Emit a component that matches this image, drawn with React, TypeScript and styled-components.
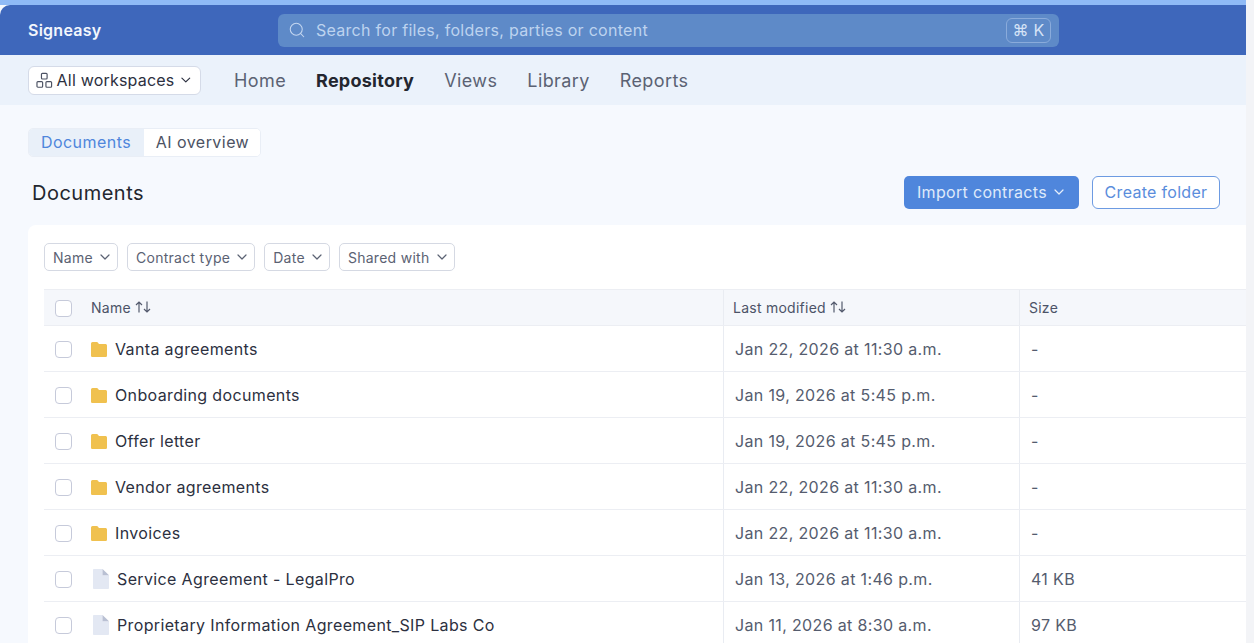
import React from "react";
import styled, { createGlobalStyle } from "styled-components";
import { ChevronDown, Search } from "lucide-react";

const Global = createGlobalStyle`
  html, body { margin: 0; padding: 0; height: 643px; overflow: hidden; background: #f3f4f7; }
  * { box-sizing: border-box; }
  body { font-family: Inter, "Liberation Sans", sans-serif; -webkit-font-smoothing: antialiased; }
`;

const Shell = styled.div`
  width: 1246px;
  height: 643px;
  overflow: hidden;
  background: #f6f9fe;
  display: flex;
  flex-direction: column;
`;
const TopStrip = styled.div`
  height: 5px;
  flex: none;
  background: #8fbaf6;
`;
const Header = styled.header`
  height: 50px;
  flex: none;
  background: #3e67bb;
  border-top-left-radius: 10px;
  display: grid;
  grid-template-columns: 250px 781px;
  align-items: center;
  padding-left: 28px;
`;
const Brand = styled.div`
  color: #f3f6fc;
  font-size: 16px;
  font-weight: 600;
  letter-spacing: 0.25px;
`;
const SearchBox = styled.div`
  height: 33px;
  border-radius: 6px;
  background: #5e8ac8;
  display: flex;
  align-items: center;
  padding: 0 8px 0 10px;
  color: #bdd3ef;
  font-size: 16px;
  letter-spacing: 0.28px;
  gap: 10px;
`;
const SearchLabel = styled.span`
  flex: 1;
`;
const Kbd = styled.span`
  height: 25px;
  width: 45px;
  border: 1px solid #8aabdb;
  border-radius: 6px;
  display: flex;
  align-items: center;
  justify-content: center;
  color: #d5e3f6;
  font-size: 16px;
`;
const SubNav = styled.nav`
  height: 50px;
  flex: none;
  background: #ebf2fb;
  display: flex;
  align-items: center;
  padding-left: 28px;
`;
const Workspace = styled.button`
  width: 173px;
  height: 29px;
  background: #fff;
  border: 1px solid #d5dbe8;
  border-radius: 6px;
  display: flex;
  align-items: center;
  padding: 0 6px 0 7px;
  gap: 4px;
  font: inherit;
  font-size: 16px;
  letter-spacing: 0.2px;
  color: #2c3040;
  margin-right: 33px;
`;
const WorkspaceLabel = styled.span`
  flex: 1;
  text-align: left;
  white-space: nowrap;
`;
const NavLink = styled.a<{ $active?: boolean }>`
  font-size: 18px;
  margin-right: 30px;
  font-weight: ${(p) => (p.$active ? 700 : 400)};
  letter-spacing: ${(p) => (p.$active ? "0.25px" : "0.4px")};
  color: ${(p) => (p.$active ? "#23262f" : "#5b6273")};
`;
const Content = styled.main`
  flex: 1;
  display: flex;
  flex-direction: column;
  padding: 23px 0 0 28px;
  min-height: 0;
`;
const Tabs = styled.div`
  width: 233px;
  height: 29px;
  display: grid;
  grid-template-columns: 115px 116px;
  border: 1px solid #e9eef6;
  border-radius: 5px;
  overflow: hidden;
  background: #fff;
`;
const Tab = styled.div<{ $active?: boolean }>`
  display: flex;
  align-items: center;
  justify-content: center;
  font-size: 16px;
  letter-spacing: 0.45px;
  padding: ${(p) => (p.$active ? "0 1px 1px 0" : "0 0 1px 1px")};
  background: ${(p) => (p.$active ? "#e9f0f9" : "#fff")};
  color: ${(p) => (p.$active ? "#4f86dc" : "#4c5263")};
`;
const TitleRow = styled.div`
  display: flex;
  align-items: center;
  height: 34px;
  margin-top: 18px;
  padding: 0 26px 0 4px;
  gap: 13px;
`;
const Title = styled.h1`
  margin: 2px auto 0 0;
  font-size: 20px;
  font-weight: 400;
  letter-spacing: 0.5px;
  color: #23262f;
`;
const PrimaryButton = styled.button`
  width: 175px;
  height: 33px;
  border: 0;
  border-radius: 5px;
  background: #4f86dc;
  color: #dfeafa;
  font: inherit;
  font-size: 16px;
  letter-spacing: 0.32px;
  display: flex;
  align-items: center;
  padding: 0 12px 0 13px;
  justify-content: space-between;
`;
const OutlineButton = styled.button`
  width: 128px;
  height: 33px;
  border: 1px solid #6d9be2;
  border-radius: 6px;
  background: #fff;
  color: #5a8ddc;
  font: inherit;
  font-size: 16px;
  letter-spacing: 0.3px;
`;
const Card = styled.section`
  flex: 1;
  margin-top: 16px;
  background: #fff;
  border-top-left-radius: 8px;
  padding: 18px 0 0 16px;
  min-height: 0;
`;
const Filters = styled.div`
  display: flex;
  gap: 9px;
  margin-bottom: 18px;
`;
const Filter = styled.button`
  height: 28px;
  border: 1px solid #d5d9e3;
  border-radius: 5px;
  background: #fff;
  color: #5b6273;
  font: inherit;
  font-size: 14px;
  letter-spacing: 0.28px;
  display: flex;
  align-items: center;
  gap: 4px;
  padding: 0 4px 0 8px;
`;
const Table = styled.div`
  display: flex;
  flex-direction: column;
`;
const Row = styled.div<{ $head?: boolean }>`
  height: ${(p) => (p.$head ? "37px" : "46px")};
  display: grid;
  grid-template-columns: 679px 296px 1fr;
  background: ${(p) => (p.$head ? "#f5f7fb" : "#fff")};
  border-bottom: 1px solid #eceef3;
  border-top: ${(p) => (p.$head ? "1px solid #eceef3" : "0")};
`;
const NameCell = styled.div<{ $head?: boolean }>`
  display: flex;
  align-items: center;
  padding-left: 11px;
  padding-bottom: ${(p) => (p.$head ? "1px" : "0")};
  font-size: ${(p) => (p.$head ? "14px" : "16px")};
  font-weight: 400;
  letter-spacing: ${(p) => (p.$head ? "0.25px" : "0.36px")};
  color: ${(p) => (p.$head ? "#4c5367" : "#2c3040")};
`;
const Check = styled.span`
  width: 17px;
  height: 17px;
  border: 1.5px solid #c6cada;
  border-radius: 4px;
  background: #fff;
  flex: none;
  margin: 2px 19px 0 0;
`;
const Cell = styled.div<{ $head?: boolean }>`
  border-left: 1px solid #e9ecf2;
  display: flex;
  align-items: center;
  padding-left: ${(p) => (p.$head ? "9px" : "11px")};
  padding-bottom: ${(p) => (p.$head ? "1px" : "0")};
  font-size: ${(p) => (p.$head ? "14px" : "16px")};
  font-weight: 400;
  letter-spacing: ${(p) => (p.$head ? "0.25px" : "0.35px")};
  color: ${(p) => (p.$head ? "#4c5367" : "#555c6e")};
`;
const SortSvg = styled.svg`
  margin-left: 4px;
  flex: none;
`;
const IconSlot = styled.span<{ $file?: boolean }>`
  display: flex;
  flex: none;
  margin: ${(p) => (p.$file ? "1px 8px 0 1px" : "2px 8px 0 0")};
`;

const SortIcon = () => (
  <SortSvg width="16" height="12" viewBox="0 0 16 12" fill="none" stroke="#535a6d" strokeWidth="1.2">
    <path d="M4 11.500V1M1 4l3-3 3 3" />
    <path d="M12 .5V11M9 8l3 3 3-3" />
  </SortSvg>
);
const WorkspaceIcon = () => (
  <svg width="17" height="17" viewBox="0 0 17 17" fill="none" stroke="#4c5263" strokeWidth="1.2">
    <rect x="5.6" y="1.2" width="5.8" height="5.8" rx="1" />
    <rect x="1" y="9.600" width="5.8" height="5.8" rx="1" />
    <rect x="10.2" y="9.600" width="5.8" height="5.8" rx="1" />
  </svg>
);
const FolderIcon = () => (
  <svg width="16" height="15" viewBox="0 0 16 15">
    <path
      d="M0 1.700C0 .8.7 0 1.600 0h4.100c.5 0 .9.200 1.200.6l1 1.400h6.500C15.300 2 16 2.700 16 3.600v9.800c0 .9-.7 1.600-1.600 1.600H1.600C.7 15 0 14.300 0 13.400z"
      fill="#f0c14f"
    />
  </svg>
);
const FileIcon = () => (
  <svg width="17" height="20" viewBox="0 0 17 20">
    <path d="M1 1C1 .5 1.400 0 2 0h8.500v6.200H17v12.800c0 .5-.4 1-1 1H2c-.6 0-1-.5-1-1z" fill="#e3e8f3" />
    <path d="M10.500 0 17 6.200H10.500z" fill="#b9c0d3" />
  </svg>
);

const rows = [
  { name: "Vanta agreements", date: "Jan 22, 2026 at 11:30 a.m.", size: "-" },
  { name: "Onboarding documents", date: "Jan 19, 2026 at 5:45 p.m.", size: "-" },
  { name: "Offer letter", date: "Jan 19, 2026 at 5:45 p.m.", size: "-" },
  { name: "Vendor agreements", date: "Jan 22, 2026 at 11:30 a.m.", size: "-" },
  { name: "Invoices", date: "Jan 22, 2026 at 11:30 a.m.", size: "-" },
  { name: "Service Agreement - LegalPro", date: "Jan 13, 2026 at 1:46 p.m.", size: "41 KB", file: true },
  { name: "Proprietary Information Agreement_SIP Labs Co", date: "Jan 11, 2026 at 8:30 a.m.", size: "97 KB", file: true },
];

export default function App() {
  return (
    <Shell>
      <Global />
      <TopStrip />
      <Header>
        <Brand>Signeasy</Brand>
        <SearchBox>
          <Search size={18} strokeWidth={1.4} color="#c3d6f0" />
          <SearchLabel>Search for files, folders, parties or content</SearchLabel>
          <Kbd>⌘ K</Kbd>
        </SearchBox>
      </Header>
      <SubNav>
        <Workspace>
          <WorkspaceIcon />
          <WorkspaceLabel>All workspaces</WorkspaceLabel>
          <ChevronDown size={16} strokeWidth={1.8} color="#2c3040" />
        </Workspace>
        <NavLink>Home</NavLink>
        <NavLink $active>Repository</NavLink>
        <NavLink>Views</NavLink>
        <NavLink>Library</NavLink>
        <NavLink>Reports</NavLink>
      </SubNav>
      <Content>
        <Tabs>
          <Tab $active>Documents</Tab>
          <Tab>AI overview</Tab>
        </Tabs>
        <TitleRow>
          <Title>Documents</Title>
          <PrimaryButton>
            Import contracts
            <ChevronDown size={16} strokeWidth={1.8} color="#e6effb" />
          </PrimaryButton>
          <OutlineButton>Create folder</OutlineButton>
        </TitleRow>
        <Card>
          <Filters>
            {["Name", "Contract type", "Date", "Shared with"].map((f) => (
              <Filter key={f}>
                {f}
                <ChevronDown size={16} strokeWidth={1.8} color="#5b6273" />
              </Filter>
            ))}
          </Filters>
          <Table>
            <Row $head>
              <NameCell $head>
                <Check />
                Name <SortIcon />
              </NameCell>
              <Cell $head>
                Last modified <SortIcon />
              </Cell>
              <Cell $head>Size</Cell>
            </Row>
            {rows.map((r) => (
              <Row key={r.name}>
                <NameCell>
                  <Check />
                  <IconSlot $file={r.file}>{r.file ? <FileIcon /> : <FolderIcon />}</IconSlot>
                  {r.name}
                </NameCell>
                <Cell>{r.date}</Cell>
                <Cell>{r.size}</Cell>
              </Row>
            ))}
          </Table>
        </Card>
      </Content>
    </Shell>
  );
}
